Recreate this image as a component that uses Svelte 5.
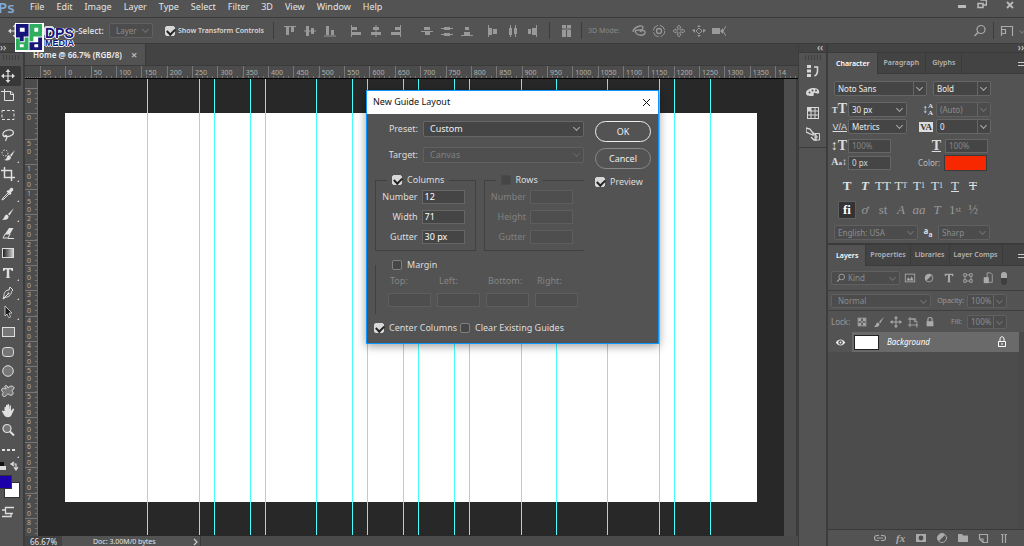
<script>
	const menus = ['File', 'Edit', 'Image', 'Layer', 'Type', 'Select', 'Filter', '3D', 'View', 'Window', 'Help'];

	const guides = [147, 199, 214, 250, 265, 316, 352, 367, 403, 418, 454, 469, 521, 556, 607, 659, 674, 710];
	const canvasLeft = 38;

	const rulerX = [50];
	for (let i = 0; i <= 1350; i += 50) rulerX.push(i);
	const rulerY = [50];
	for (let i = 0; i <= 750; i += 50) rulerY.push(i);

	const move = '<path d="M7 1v12M1 7h12" stroke="currentColor" stroke-width="1.2"/><path d="M7 0l2.4 3H4.600zM7 14l2.400-3H4.600zM0 7l3-2.400v4.800zM14 7l-3-2.400v4.800z" fill="currentColor"/>';
	const half = '<circle cx="7" cy="7" r="4.500" stroke="currentColor" fill="none"/><path d="M3.800 10.200A4.500 4.500 0 0 1 10.200 3.800z" fill="currentColor"/>';
	const brush = '<path d="M13 1L7 7l1.500 1.500zM6 7.500c-3 0-2 4-5 5 3 1 7 0 6.500-3.500z" fill="currentColor"/>';

	const icons = {
		move,
		artboard: '<path d="M3.500 0v11.500H12.500V5L10 2.500H0" fill="none" stroke="currentColor"/><path d="M9.500 2.500v3h3" fill="none" stroke="currentColor"/>',
		marquee: '<rect x="1" y="2.500" width="12" height="9" fill="none" stroke="currentColor" stroke-dasharray="3 2"/>',
		lasso: '<path d="M4 9C0 7 2 3 7 2s7 3 4 5-7 2-7 1 2-1 2 1-2 2-1 4" fill="none" stroke="currentColor" stroke-width="1.200"/>',
		quick: '<circle cx="4" cy="5" r="3" fill="none" stroke="currentColor" stroke-dasharray="1.500 1.500"/><path d="M14 2L9 7l1.500 1.500zM8 7c-3 1-1 4-5 5 4 1 7 0 7-3z" fill="currentColor"/>',
		crop: '<path d="M3.500 0v10.500H14M0 3.500h10.500V14" fill="none" stroke="currentColor" stroke-width="1.500"/>',
		dropper: '<path d="M9 1.500c2-2 4 0 3 2l-2 2 .5 1L9 8 5.500 4.500 7 3l1 .5z" fill="currentColor"/><path d="M7 6l-5 5-1 2 2-1 5-5" fill="none" stroke="currentColor"/>',
		brush,
		eraser: '<path d="M8 2h4.500L9 8H4z" fill="currentColor"/><path d="M4 8h5l-2 4H2zM7 12.500h6" fill="none" stroke="currentColor"/>',
		type: '<path d="M2 2h10v3h-1.200L10 3.500H8.200v7.500l1.300 1H4.500l1.300-1V3.500H4L3.200 5H2z" fill="currentColor"/>',
		pen: '<path d="M9 1l3 3-1.500 1.500c0 3-2 5-6 6L2 13l1-3c0-4 2-6 5-6zM3 12l4-4" fill="none" stroke="currentColor"/><circle cx="7.500" cy="7.500" r="1" fill="currentColor"/>',
		arrow: '<path d="M4 1l7 7H8l1.500 4-1.700.7L6 9l-2 2z" fill="#1c1c1c" stroke="currentColor" stroke-width=".8"/>',
		rect: '<rect x="1.500" y="2.500" width="12" height="9" fill="#777" stroke="currentColor"/>',
		round: '<rect x="1.500" y="2.500" width="11" height="9" rx="3" fill="#777" stroke="currentColor"/>',
		ellipse: '<circle cx="7" cy="7" r="5.300" fill="#777" stroke="currentColor"/>',
		blob: '<path d="M4 2c1-1 3 0 3 2 2-3 6-2 6 0s-3 2-2 3 2 3 0 4-3-1-4-1-3 4-5 2 1-3 0-4-2-1-1-3 3 0 4 0-2-2-1-3z" fill="#777" stroke="currentColor"/>',
		hand: '<path d="M3.500 7V3.500c0-1 1.500-1 1.500 0V6V1.500c0-1 1.500-1 1.500 0V6V.800c0-1 1.600-1 1.600 0V6l.5-4c.1-1 1.500-.8 1.400.2L10 7l1.500-2c.6-1 2-.3 1.500.7L10.500 11c-1 3-6 3-7.500 0L1 7.500c-.5-1 .8-1.500 1.500-.5z" fill="currentColor"/>',
		zoom: '<circle cx="6" cy="5.500" r="4" fill="#777" stroke="currentColor" stroke-width="1.200"/><path d="M9 8.500l4 4" stroke="currentColor" stroke-width="2"/>',
		dots: '<path d="M1 7h3M6 7h3M11 7h3" stroke="currentColor" stroke-width="2"/>',
		alignTop: '<path d="M1 2.500h12" stroke="currentColor"/><path d="M3 3h3v8H3zM8 3h3v5H8z" fill="currentColor"/>',
		alignMid: '<path d="M1 7h12" stroke="currentColor"/><path d="M3 2h3v10H3zM8 4h3v6H8z" fill="currentColor"/>',
		alignBottom: '<path d="M1 12h12" stroke="currentColor"/><path d="M3 2h3v9H3zM8 6h3v5H8z" fill="currentColor"/>',
		alignLeft: '<path d="M2.500 1v12" stroke="currentColor"/><path d="M3 3h5v3H3zM3 8h9v3H3z" fill="currentColor"/>',
		alignCenter: '<path d="M7 1v12" stroke="currentColor"/><path d="M4 3h6v3H4zM2 8h10v3H2z" fill="currentColor"/>',
		alignRight: '<path d="M11.500 1v12" stroke="currentColor"/><path d="M6 3h5v3H6zM2 8h9v3H2z" fill="currentColor"/>',
		distTop: '<path d="M1 7.500h12" stroke="currentColor"/><path d="M4 3h6v3H4zM5 7h5v4H5z" fill="currentColor"/>',
		distMid: '<path d="M1 4.500h12M1 10.500h12" stroke="currentColor"/><path d="M4 3h6v3H4zM4 9h6v3H4z" fill="currentColor"/>',
		distBottom: '<path d="M1 11.500h12" stroke="currentColor"/><path d="M5 3h4v3H5zM4 8h6v3H4z" fill="currentColor"/>',
		distLeft: '<path d="M2.500 1v12" stroke="currentColor"/><path d="M3 4h3v7H3zM7 5h4v5H7z" fill="currentColor"/>',
		distCenter: '<path d="M4.500 1v12M9.500 1v12" stroke="currentColor"/><path d="M3 4h3v7H3zM8 4h3v6H8z" fill="currentColor"/>',
		distRight: '<path d="M10.500 1v12" stroke="currentColor"/><path d="M2 5h3v5H2zM6 4h4v7H6z" fill="currentColor"/>',
		auto: '<path d="M3 1h4v3H3zM3 6h4v7H3zM8 1h4v3H8zM8 6h4v7H8z" fill="currentColor"/><path d="M3 5h9" stroke="currentColor"/>',
		orbit: '<path d="M1 8c0-3 3-5 7-6s4 4 0 4-6 0-4 3 8 3 9 0-4-3-5-1" fill="none" stroke="currentColor" stroke-width="1.300"/>',
		roll: '<circle cx="7" cy="7" r="2.500" fill="none" stroke="currentColor" stroke-width="1.300"/><circle cx="7" cy="7" r="5.700" fill="none" stroke="currentColor" stroke-dasharray="7 2"/>',
		pan: '<path d="M7 1l2 2.500H8V6h2.500V5L13 7l-2.500 2V8H8v2.500h1L7 13l-2-2.500h1V8H3.500v1L1 7l2.500-2v1H6V3.500H5z" fill="none" stroke="currentColor" stroke-width=".9"/>',
		slide: '<path d="M7 4l3 3-3 3-3-3z" fill="none" stroke="currentColor"/><path d="M7 1l2 2H5zM7 13l2-2H5zM0 6l3-1v4zM14 6l-3-1v4z" fill="currentColor"/>',
		camera: '<path d="M0 4h8v6H0zM8 7l3-3v6z" fill="currentColor"/><path d="M14 2l-3 5 3 5" fill="none" stroke="currentColor"/>',
		search: '<circle cx="8" cy="5.500" r="4" fill="none" stroke="currentColor" stroke-width="1.200"/><path d="M5 8.500L1.500 12" stroke="currentColor" stroke-width="1.500"/>',
		workspace: '<path d="M1.500 12V2.500h11V12M1.500 5.500h4v4h-4" fill="none" stroke="currentColor" stroke-width="1.200"/>',
		history: '<path d="M1 1h4v3H1zM1 5.500h4v3H1zM1 10h4v3H1z" fill="currentColor"/><path d="M8 3h3.500v4c0 3-1 4-3 5" fill="none" stroke="currentColor" stroke-width="1.500"/>',
		palette: '<path d="M0 8c0-3 4-5 8-5s6 3 5 5-4-1-5 0 1 3-2 3-6 0-6-3z" fill="currentColor"/><circle cx="3.500" cy="7.500" r="1" fill="#535353"/><circle cx="6.500" cy="5.500" r="1" fill="#535353"/><circle cx="10" cy="5.500" r="1" fill="#535353"/>',
		swatches: '<rect x="1.500" y="1.500" width="11" height="11" fill="none" stroke="currentColor"/><path d="M1.500 5h11M1.500 9h11M5 1.500v11M9 1.500v11" stroke="currentColor"/><path d="M2 2h3v3H2z" fill="currentColor"/>',
		styles: '<path d="M0 1l4 1 3 4v2L0 5zM6 5l4 3v5H8L5 10" fill="none" stroke="currentColor" stroke-width="1.300"/><path d="M9 6.500h4.500v6.500H9zM11 9v2" fill="none" stroke="currentColor"/>',
		image: '<rect x="1.500" y="2.500" width="11" height="9" fill="none" stroke="currentColor"/><path d="M3 10l2-4 2 3 2-4 2 5z" fill="currentColor"/>',
		half,
		frame: '<path d="M3.500 3.500h7v7h-7z" fill="none" stroke="currentColor"/><path d="M2 2h3v3H2zM9 2h3v3H9zM2 9h3v3H2zM9 9h3v3H9z" fill="#535353" stroke="currentColor"/>',
		smart: '<path d="M6 1h4l2 2v9H6z" fill="none" stroke="currentColor"/><path d="M2 6h6v7H2z" fill="currentColor"/>',
		checker: '<rect x="2.500" y="2.500" width="9" height="9" fill="none" stroke="currentColor"/><path d="M3 3h3v3H3zM8 3h3v3H8zM6 6h2v2H6zM3 8h3v3H3zM8 8h3v3H8z" fill="currentColor"/>',
		artframe: '<path d="M3.500 1v12M3.500 3.500h5l3 3v7M1 3.500h10M1 10.500h12M8.500 3v3.500h3" fill="none" stroke="currentColor"/>',
		lock: '<path d="M3 6h8v6H3z" fill="currentColor"/><path d="M4.500 6V4c0-3 5-3 5 0v2" fill="none" stroke="currentColor" stroke-width="1.300"/>',
		lockOpen: '<path d="M3.500 6.500h7v5h-7zM5 6V4c0-3 4-3 4 0v2M7 8v2" fill="none" stroke="currentColor"/>',
		eye: '<path d="M1 7c3-5 9-5 12 0-3 5-9 5-12 0z" fill="currentColor"/><circle cx="7" cy="7" r="2.800" fill="#535353"/><circle cx="7" cy="7" r="1.200" fill="currentColor"/>',
		link: '<path d="M6 4.500H4a2.500 2.500 0 0 0 0 5h2M8 4.500h2a2.500 2.500 0 0 1 0 5H8M4 7h6" fill="none" stroke="currentColor" stroke-width="1.100"/>',
		mask: '<path d="M2 3h10v8H2z" fill="currentColor"/><circle cx="7" cy="7" r="2.400" fill="#4b4b4b"/>',
		folder: '<path d="M2 3h4l1 1.500h5V11H2z" fill="currentColor"/>',
		newLayer: '<path d="M3.500 3.500h8v8H7L3.500 8zM7 11.500V8H3.500" fill="none" stroke="currentColor" stroke-width="1.200"/>',
		trash: '<path d="M5.500 4v8M8.500 4v8M4 3.500h2.500M7.500 3.500H10" stroke="currentColor" stroke-width="1.200"/>',
	};

	const tools = ['move', 'artboard', 'marquee', 'lasso', 'quick', 'crop', 'dropper', 'brush', 'eraser', 'gradient', 'type', 'pen', 'arrow', 'rect', 'round', 'ellipse', 'blob', 'hand', 'zoom', 'dots'];
	const corner = ['quick', 'crop', 'dropper', 'brush', 'type', 'pen', 'arrow', 'dots'];
	const alignGroups = [
		['alignTop', 'alignMid', 'alignBottom'],
		['alignLeft', 'alignCenter', 'alignRight'],
		['distTop', 'distMid', 'distBottom'],
		['distLeft', 'distCenter', 'distRight'],
	];

	let columns = $state([
		{ label: 'Number', value: '12' },
		{ label: 'Width', value: '71' },
		{ label: 'Gutter', value: '30 px' },
	]);
	const rows = ['Number', 'Height', 'Gutter'];
	const margins = ['Top:', 'Left:', 'Bottom:', 'Right:'];
	let open = $state(true);
	let tool = $state('move');
</script>

{#snippet icon(name)}
	<svg class="icon" viewBox="0 0 14 14" aria-hidden="true">{@html icons[name]}</svg>
{/snippet}

{#snippet combo(label, value, cls)}
	<span class="combo {cls}">
		<select aria-label={label}><option>{value}</option></select>
	</span>
{/snippet}

<div class="app">
	<header class="menubar">
		<span class="ps">Ps</span>
		<nav>
			{#each menus as m}
				<button>{m}</button>
			{/each}
		</nav>
		<div class="window-buttons">
			<button aria-label="Minimize"><svg viewBox="0 0 10 10"><path d="M1 6h8v3H1z" fill="#bbb" /></svg></button>
			<button aria-label="Restore"><svg viewBox="0 0 10 10"><path d="M3.500 1h6v5h-3M1 4.500h5v4H1z" fill="none" stroke="#bbb" stroke-width="1.500" /></svg></button>
			<button class="close" aria-label="Close"><svg viewBox="0 0 10 10"><path d="M2 3l6 6M8 3L2 9" stroke="#bbb" stroke-width="1.800" /></svg></button>
		</div>
	</header>

	<div class="options">
		<span class="tool-preview">{@render icon('move')}</span>
		<label class="check auto"><input type="checkbox" checked />Auto-Select:</label>
		{@render combo('Auto-select target', 'Layer', 'dim w-layer')}
		<label class="check show"><input type="checkbox" checked />Show Transform Controls</label>
		<i class="sep"></i>
		{#each alignGroups as group, i}
			<div class="icon-group" class:spaced={i === 2}>
				{#each group as name}
					<button aria-label={name}>{@render icon(name)}</button>
				{/each}
			</div>
		{/each}
		<i class="sep"></i>
		<button class="auto-align" aria-label="Auto align">{@render icon('auto')}</button>
		<i class="sep"></i>
		<span class="mode">3D Mode:</span>
		<div class="icon-group">
			{#each ['orbit', 'roll', 'pan', 'slide', 'camera'] as name}
				<button aria-label={name}>{@render icon(name)}</button>
			{/each}
		</div>
		<div class="options-end">
			<button aria-label="Search">{@render icon('search')}</button>
			<i class="sep"></i>
			<button aria-label="Workspace">{@render icon('workspace')}</button>
			<i class="chev"></i>
		</div>
	</div>

	<div class="body">
		<aside class="toolbar">
			<div class="strip">››</div>
			<div class="grip"></div>
			<div class="tools">
				{#each tools as name}
					<button class:active={tool === name} class:corner={corner.includes(name)} aria-label={name} onclick={() => (tool = name)}>
						{#if name === 'gradient'}
							<span class="gradient"></span>
						{:else}
							{@render icon(name)}
						{/if}
					</button>
				{/each}
			</div>
			<div class="swap">
				<svg viewBox="0 0 20 10"><path d="M0 1h3v4h3v4H0z" fill="#ddd" /><path d="M0 1h4v4H0z" fill="#111" /><path d="M12 3h4v5M14 1l-3 2 3 2M14 6l2 3 2-3" fill="none" stroke="#ddd" stroke-width="1.200" /></svg>
			</div>
			<div class="colors"><i class="back"></i><i class="front"></i></div>
			<svg class="screen" viewBox="0 0 14 14"><path d="M0 5h3M12 2.500H3.500v6H11M0 11.500h9V9" fill="none" stroke="#ddd" stroke-width="1.300" /></svg>
		</aside>

		<section class="document">
			<div class="tabs">
				<div class="tab">Home @ 66.7% (RGB/8) <button aria-label="Close tab">×</button></div>
			</div>
			<div class="ruler-x">
				<i class="origin"></i>
				{#each rulerX as n}
					<span>{n}</span>
				{/each}
				<span class="last">14</span>
			</div>
			<div class="work">
				<div class="ruler-y">
					{#each rulerY as n}
						<span>{n}</span>
					{/each}
					<span>800</span>
				</div>
				<div class="canvas">
					<div class="page"></div>
					{#each guides as x}
						<i class="guide" style="left: {x - canvasLeft}px"></i>
					{/each}
				</div>
				<div class="scroll-y"></div>
			</div>
			<footer class="status">
				<span class="percent">66.67%</span>
				<span class="doc">Doc: 3.00M/0 bytes</span>
				<span class="more"><svg viewBox="0 0 6 8"><path d="M1 1l3 3-3 3" fill="none" stroke="#ccc" stroke-width="1.200" /></svg></span>
			</footer>
		</section>

		<aside class="dock">
			<div class="strip">‹‹</div>
			<div class="grip"></div>
			<div class="dock-icons">
				{#each ['history', 'palette', 'swatches', 'styles'] as name}
					<button aria-label={name}>{@render icon(name)}</button>
				{/each}
			</div>
		</aside>

		<aside class="panels">
			<div class="strip end">››</div>
			<section class="character">
				<div class="panel-tabs char-tabs">
					<button class="current">Character</button>
					<button>Paragraph</button>
					<button>Glyphs</button>
					<i class="burger"></i>
				</div>
				<div class="fields">
					<div class="line first">
						{@render combo('Font family', 'Noto Sans', 'split w-family')}
						{@render combo('Font style', 'Bold', 'split w-style')}
					</div>
					<div class="line">
						<b class="sym"><small>T</small>T</b>
						{@render combo('Font size', '30 px', 'w-size')}
						<b class="sym right stack">↕<small>A<br />A</small></b>
						{@render combo('Leading', '(Auto)', 'split dim w-lead')}
					</div>
					<div class="line">
						<b class="sym va">V/A</b>
						{@render combo('Kerning', 'Metrics', 'w-size')}
						<b class="sym right"><span class="inverse">VA</span></b>
						{@render combo('Tracking', '0', 'split w-lead')}
					</div>
					<div class="line scale">
						<b class="sym">↕T</b>
						<input class="w-scale dim" aria-label="Vertical scale" value="100%" />
						<b class="sym right wide under">T</b>
						<input class="w-scale dim" aria-label="Horizontal scale" value="100%" />
					</div>
					<div class="line">
						<b class="sym small">A<sup>a</sup>↕</b>
						<input class="w-scale" aria-label="Baseline shift" value="0 px" />
						<span class="color-label">Color:</span>
						<button class="swatch" aria-label="Text color"></button>
					</div>
				</div>
				<div class="glyphs">
					<button><b>T</b></button>
					<button><b><em>T</em></b></button>
					<button>TT</button>
					<button>T<small>T</small></button>
					<button>T<sup>1</sup></button>
					<button>T<sub>1</sub></button>
					<button><u>T</u></button>
					<button><s>T</s></button>
				</div>
				<div class="glyphs opentype">
					<button class="on">fi</button>
					<button><em>ơ</em></button>
					<button>st</button>
					<button><em>A</em></button>
					<button><em>aa</em></button>
					<button><em>T</em></button>
					<button>1<sup>st</sup></button>
					<button>½</button>
				</div>
				<div class="line lang">
					{@render combo('Language', 'English: USA', 'dim w-lang')}
					<b class="aa">a<sub>a</sub></b>
					{@render combo('Anti-aliasing', 'Sharp', 'dim w-sharp')}
				</div>
			</section>

			<section class="layers">
				<div class="panel-tabs">
					<button class="current">Layers</button>
					<button>Properties</button>
					<button>Libraries</button>
					<button>Layer Comps</button>
					<i class="burger"></i>
				</div>
				<div class="row filter">
					<span class="kind">{@render icon('search')}{@render combo('Filter', 'Kind', 'dim w-kind')}</span>
					<div class="filters">
						{#each ['image', 'half', 'type', 'frame', 'smart'] as name}
							<button aria-label={name}>{@render icon(name)}</button>
						{/each}
						<i class="toggle"></i>
					</div>
				</div>
				<div class="row">
					{@render combo('Blend mode', 'Normal', 'dim w-blend')}
					<span class="label">Opacity:</span>
					{@render combo('Opacity', '100%', 'split dim w-pct')}
				</div>
				<div class="row locks">
					<span class="lock-label">Lock:</span>
					{#each ['checker', 'brush', 'move', 'artframe', 'lock'] as name}
						<button aria-label={name}>{@render icon(name)}</button>
					{/each}
					<span class="label">Fill:</span>
					{@render combo('Fill', '100%', 'split dim w-pct')}
				</div>
				<div class="layer-list">
					<div class="layer">
						<button class="eye" aria-label="Visibility">{@render icon('eye')}</button>
						<div class="layer-main">
							<i class="thumb"></i>
							<em>Background</em>
							{@render icon('lockOpen')}
						</div>
					</div>
				</div>
				<footer class="layer-actions">
					<button aria-label="Link">{@render icon('link')}</button>
					<button class="fx">fx</button>
					{#each ['mask', 'half', 'folder', 'newLayer', 'trash'] as name}
						<button aria-label={name}>{@render icon(name)}</button>
					{/each}
				</footer>
			</section>
		</aside>
	</div>

	<div class="brand">
		<svg viewBox="0 0 30 30">
			<path d="M0 0h30v30H0z" fill="#fff" />
			<path d="M1 1h13v13H9v5H5v-4H1zM5 5v4h5V5z" fill="#16167a" fill-rule="evenodd" />
			<path d="M15 1h13v13h-9v5h-4zM20 5v4h4V5z" fill="#2fae60" fill-rule="evenodd" />
			<path d="M1 16h4v4h5v-5h4v13H1zM5 22v3h4v-3z" fill="#2fae60" fill-rule="evenodd" />
			<path d="M24 15h4v13H15v-8h9zM20 22v3h4v-3z" fill="#16167a" fill-rule="evenodd" />
		</svg>
		<div><strong>DPS</strong><span>MEDIA</span></div>
	</div>

	{#if open}
		<div class="dialog" role="dialog" aria-label="New Guide Layout">
			<div class="title">
				<span>New Guide Layout</span>
				<button aria-label="Close" onclick={() => (open = false)}><svg viewBox="0 0 10 10"><path d="M1 1l7 7M8 1L1 8" stroke="#111" /></svg></button>
			</div>
			<div class="content">
				<div class="settings">
					<div class="pick">
						<label for="preset">Preset:</label>
						<span class="combo"><select id="preset"><option>Custom</option></select></span>
					</div>
					<div class="pick">
						<label for="target">Target:</label>
						<span class="combo off"><select id="target" disabled><option>Canvas</option></select></span>
					</div>
					<div class="sets">
						<fieldset>
							<legend><label class="check"><input type="checkbox" checked />Columns</label></legend>
							{#each columns as c}
								<label class="num">{c.label}<input type="text" bind:value={c.value} /></label>
							{/each}
						</fieldset>
						<fieldset class="no-right">
							<legend><label class="check"><input type="checkbox" /><span>Rows</span></label></legend>
							{#each rows as r}
								<label class="num">{r}<input type="text" disabled /></label>
							{/each}
						</fieldset>
					</div>
					<div class="margin">
						<label class="check"><input type="checkbox" />Margin</label>
						<div class="margin-fields">
							{#each margins as m}
								<label>{m}<input type="text" disabled /></label>
							{/each}
						</div>
					</div>
				</div>
				<div class="actions">
					<button class="ok" onclick={() => (open = false)}>OK</button>
					<button onclick={() => (open = false)}>Cancel</button>
					<label class="check"><input type="checkbox" checked />Preview</label>
				</div>
			</div>
			<div class="bottom">
				<label class="check"><input type="checkbox" checked />Center Columns</label>
				<label class="check"><input type="checkbox" />Clear Existing Guides</label>
			</div>
		</div>
	{/if}
</div>

<style>
	:global(body) {
		margin: 0;
		background: #535353;
	}

	.app {
		position: relative;
		display: flex;
		flex-direction: column;
		height: 100vh;
		overflow: hidden;
		background: #535353;
		color: #d8d8d8;
		font: 8px/12px "Noto Sans", "Open Sans", sans-serif;
	}

	.app * {
		box-sizing: border-box;
	}

	button, input, select {
		margin: 0;
		padding: 0;
		border: 0;
		border-radius: 0;
		background: none;
		color: inherit;
		font: inherit;
	}

	button {
		display: flex;
		align-items: center;
		justify-content: center;
	}

	.icon {
		display: block;
		flex: none;
		width: 14px;
		height: 14px;
	}

	input[type="checkbox"] {
		appearance: none;
		position: relative;
		flex: none;
		width: 10px;
		height: 10px;
		border: 1px solid #808080;
		border-radius: 2px;
		background: #464646;
	}

	input[type="checkbox"]:checked {
		border-color: #d8d8d8;
		background: #d8d8d8;
	}

	input[type="checkbox"]:checked::after {
		content: "";
		position: absolute;
		left: 1px;
		top: 1px;
		width: 6px;
		height: 4px;
		border-left: 2px solid #222;
		border-bottom: 2px solid #222;
		transform: rotate(-45deg);
	}

	.check {
		display: flex;
		align-items: center;
		gap: 5px;
		white-space: nowrap;
	}

	.combo {
		position: relative;
		display: flex;
		flex: none;
		height: 15px;
		border: 1px solid #666;
		border-radius: 2px;
		background: #454545;
		color: #eee;
	}

	.combo select {
		appearance: none;
		width: 100%;
		padding: 0 12px 0 3px;
		outline: none;
		opacity: 1;
	}

	.combo::after, .chev {
		content: "";
		width: 4px;
		height: 4px;
		border-right: 1px solid #aaa;
		border-bottom: 1px solid #aaa;
		transform: rotate(45deg);
	}

	.chev {
		border-color: #777;
	}

	.combo::after {
		position: absolute;
		right: 4px;
		top: 3px;
		pointer-events: none;
	}

	.combo.split::before {
		content: "";
		position: absolute;
		right: 12px;
		top: 0;
		bottom: 0;
		border-left: 1px solid #666;
	}

	.dim {
		color: #858585;
	}

	.combo.dim {
		border-color: #606060;
		background: #4c4c4c;
		color: #8c8c8c;
	}

	.combo.dim::after {
		border-color: #707070;
	}

	/* menu bar */
	.menubar {
		display: flex;
		flex: none;
		height: 18px;
		padding-bottom: 4px;
		border-bottom: 1px solid #3a3a3a;
		align-items: center;
		font-size: 9px;
		color: #e4e4e4;
	}

	.ps {
		width: 30px;
		font-size: 15px;
		font-weight: 600;
		color: #7fa9d6;
		text-indent: -2px;
	}

	nav {
		display: flex;
		gap: 12px;
	}

	.window-buttons {
		display: flex;
		gap: 10px;
		margin-left: auto;
		padding: 0 9px 5px 0;
	}

	.window-buttons svg {
		width: 10px;
		height: 10px;
	}

	.close {
		margin-left: 8px;
	}

	/* options bar */
	.options {
		display: flex;
		flex: none;
		align-items: center;
		height: 26px;
		padding-left: 8px;
		border-bottom: 1px solid #3a3a3a;
		font-weight: 600;
	}

	.tool-preview {
		width: 36px;
	}

	.auto {
		width: 65px;
		gap: 3px;
	}

	.w-layer {
		width: 44px;
		font-weight: 400;
	}

	.w-layer select {
		padding-left: 6px;
	}

	.show {
		width: 117px;
		padding-left: 12px;
		gap: 3px;
		font-size: 7px;
	}

	.sep {
		width: 1px;
		height: 17px;
		margin: 0 3px;
		background: #3c3c3c;
	}

	.icon-group {
		display: flex;
		gap: 6px;
		margin: 0 6px;
		color: #999;
	}

	.spaced {
		margin-left: 11px;
	}

	.auto-align {
		width: 25px;
		color: #999;
	}

	.mode {
		padding: 0 6px 0 3px;
		font-size: 7px;
		font-weight: 400;
		color: #8a8a8a;
	}

	.options-end {
		display: flex;
		align-items: center;
		gap: 3px;
		margin-left: auto;
		color: #aaa;
	}

	.options-end .chev {
		margin-left: 3px;
	}

	.body {
		display: flex;
		flex: 1;
		min-height: 0;
	}

	.strip {
		flex: none;
		height: 9px;
		background: #434343;
		border-bottom: 1px solid #3a3a3a;
		font-size: 10px;
		line-height: 6px;
		color: #ddd;
	}

	.grip {
		flex: none;
		height: 5px;
		margin: 2px 3px;
		background: repeating-linear-gradient(90deg, #404040 0 1px, transparent 1px 3px);
	}

	/* tools */
	.toolbar {
		display: flex;
		flex: none;
		flex-direction: column;
		width: 25px;
		border-right: 2px solid #3c3c3c;
		color: #e0e0e0;
	}

	.tools {
		display: grid;
		grid-auto-rows: 1fr;
		flex: none;
		height: 394px;
		margin-top: 4px;
	}

	.tools button {
		position: relative;
		width: 21px;
		padding-right: 5px;
		border-radius: 0 2px 2px 0;
	}

	.tools .active {
		background: #383838;
	}

	.tools .corner::after {
		content: "";
		position: absolute;
		right: 2px;
		bottom: 2px;
		border: 1px solid;
		border-color: transparent #ccc #ccc transparent;
	}

	.gradient {
		width: 12px;
		height: 10px;
		border: 1px solid #ddd;
		background: linear-gradient(90deg, #222, #ccc);
	}

	.swap {
		height: 13px;
		padding-top: 1px;
	}

	.swap svg {
		display: block;
		width: 20px;
		height: 10px;
	}

	.colors {
		position: relative;
		height: 30px;
		margin-top: 2px;
	}

	.colors i {
		position: absolute;
		border: 1px solid #333;
	}

	.front {
		left: -3px;
		top: 0;
		width: 15px;
		height: 14px;
		background: #1c00a8;
	}

	.back {
		left: 4px;
		top: 7px;
		width: 16px;
		height: 16px;
		background: #fff;
	}

	.screen {
		width: 14px;
		height: 14px;
		margin-left: 2px;
	}

	/* document */
	.document {
		display: flex;
		flex: 1;
		flex-direction: column;
		min-width: 0;
	}

	.tabs {
		display: flex;
		flex: none;
		height: 22px;
		background: #434343;
		border-bottom: 1px solid #3a3a3a;
	}

	.tab {
		display: flex;
		align-items: center;
		gap: 9px;
		padding: 0 8px;
		border-right: 1px solid #3a3a3a;
		background: #535353;
		font-weight: 600;
		color: #eee;
	}

	.tab button {
		font-size: 11px;
		color: #bbb;
	}

	.ruler-x {
		display: flex;
		flex: none;
		height: 13px;
		border-bottom: 1px solid #000;
		background: #4c4c4c;
		font-size: 7px;
		line-height: 14px;
		color: #b0b0b0;
	}

	.origin {
		width: 15px;
		border: 0 dotted #777;
		border-bottom-width: 1px;
	}

	.ruler-x span {
		flex: 1;
		min-width: 0;
		padding-left: 2px;
		border-left: 1px solid #777;
		background: repeating-linear-gradient(90deg, transparent 0 4px, #777 4px 5px) bottom / 100% 2px no-repeat;
	}

	.ruler-x .last {
		flex: 0 0 23px;
	}

	.work {
		display: flex;
		flex: 1;
		min-height: 0;
	}

	.ruler-y {
		display: flex;
		flex-direction: column;
		flex: none;
		width: 13px;
		padding-top: 9px;
		overflow: hidden;
		border-right: 1px solid #6a6a6a;
		background: #4c4c4c;
		font-size: 7px;
		line-height: 8px;
		color: #b0b0b0;
	}

	.ruler-y span {
		flex: 1;
		min-height: 0;
		padding: 0 6px 0 2px;
		border-top: 1px solid #777;
		background: repeating-linear-gradient(180deg, transparent 0 4px, #777 4px 5px) right / 2px 100% no-repeat;
		word-break: break-all;
	}

	.ruler-y span:last-child {
		flex: 0 0 18px;
	}

	.canvas {
		position: relative;
		flex: 1;
		padding: 34px 27px;
		background: #282828;
	}

	.page {
		height: 100%;
		background: #fff;
	}

	.guide {
		position: absolute;
		top: 0;
		bottom: 1px;
		width: 1px;
		background: #4afcfc;
	}

	.scroll-y {
		width: 14px;
		border-right: 2px solid #3c3c3c;
		background: #4d4d4d;
	}

	.status {
		display: flex;
		flex: none;
		height: 10px;
		line-height: 12px;
		background: #4a4a4a;
		color: #e4e4e4;
		font-size: 8px;
	}

	.percent {
		width: 37px;
		padding-left: 5px;
		background: #434343;
	}

	.doc {
		width: 125px;
		padding-left: 31px;
		background: #535353;
		font-size: 7px;
	}

	.more {
		width: 14px;
		padding: 2px 0 0 6px;
		border-right: 1px solid #3a3a3a;
		background: #535353;
	}

	.more svg {
		display: block;
		width: 6px;
		height: 8px;
	}

	/* icon dock */
	.dock {
		flex: none;
		width: 30px;
		border-left: 1px solid #3c3c3c;
		border-right: 2px solid #3c3c3c;
	}

	.dock .strip {
		padding-left: 18px;
	}

	.dock .grip {
		width: 16px;
		margin-left: 6px;
	}

	.dock-icons {
		display: flex;
		flex-direction: column;
		align-items: center;
		gap: 7px;
		padding: 2px 0 6px;
		border-bottom: 1px solid #3a3a3a;
	}

	/* panels */
	.panels {
		display: flex;
		flex: none;
		flex-direction: column;
		width: 196px;
	}

	.end {
		text-align: right;
	}

	.panel-tabs {
		display: flex;
		flex: none;
		height: 21px;
		background: #434343;
		border-bottom: 1px solid #3a3a3a;
		font-weight: 600;
		font-size: 7px;
		color: #b4b4b4;
	}

	.panel-tabs button {
		padding: 0 4px;
		border-right: 1px solid #3a3a3a;
		white-space: nowrap;
	}

	.panel-tabs .current {
		height: 21px;
		padding: 0 7px 0 8px;
		background: #535353;
		color: #fff;
	}

	.char-tabs button {
		padding: 0 6px;
	}

	.burger {
		width: 6px;
		height: 4px;
		margin: 9px 0 0 auto;
		border: solid #ccc;
		border-width: 1px 0;
	}

	.character {
		flex: none;
		height: 192px;
		border-bottom: 2px solid #3a3a3a;
	}

	.fields {
		padding: 0 6px;
	}

	.line {
		display: flex;
		align-items: center;
		height: 15px;
		margin-top: 2px;
	}

	.line.first {
		gap: 6px;
		margin: 7px 0 6px;
	}

	.line.scale {
		margin-top: 4px;
	}

	.fields input {
		height: 14px;
		padding-left: 3px;
		border: 1px solid #666;
		background: #454545;
	}

	.fields .combo {
		height: 15px;
	}

	.w-family { width: 93px; }
	.w-style { width: 58px; }
	.w-size { width: 59px; }
	.w-lead { width: 55px; }
	.w-scale { width: 43px; }
	.w-lang { width: 84px; }
	.w-sharp { width: 52px; }
	.w-kind { width: 69px; }
	.w-blend { width: 100px; }
	.w-pct { width: 40px; }

	.sym {
		display: flex;
		align-items: baseline;
		justify-content: flex-end;
		width: 14px;
		flex: none;
		padding-right: 1px;
		font: bold 14px/13px "Liberation Serif", serif;
		white-space: nowrap;
		color: #ddd;
	}

	.sym small {
		font-size: 9px;
	}

	.sym.small {
		font-size: 10px;
	}

	.sym sup {
		font-size: 7px;
	}

	.va {
		font: 9px/12px "Liberation Sans", sans-serif;
		text-decoration: underline;
	}

	.right {
		margin-left: 11px;
	}

	.fields .right {
		width: 18px;
		padding-right: 3px;
	}

	.fields .wide {
		width: 54px;
		margin-left: 0;
		padding-right: 4px;
	}

	.fields .stack {
		align-items: center;
		font-size: 12px;
	}

	.stack small {
		font: bold 7px/7px "Liberation Serif", serif;
	}

	.inverse {
		padding: 0 1px;
		background: #ddd;
		color: #333;
		font-size: 9px;
		line-height: 10px;
	}

	.under {
		text-decoration: underline;
	}

	.color-label {
		width: 53px;
		padding-left: 27px;
		color: #bbb;
	}

	.swatch {
		width: 43px;
		height: 16px;
		border: 1px solid #3a3a3a;
		background: #f72800;
	}

	.glyphs {
		display: grid;
		grid-template-columns: repeat(8, 18px);
		height: 18px;
		margin: 7px 10px 0;
		font: 13px/12px "Liberation Serif", serif;
		color: #e0e0e0;
	}

	.glyphs small, .glyphs sup, .glyphs sub {
		font-size: 8px;
		line-height: 6px;
	}

	.opentype {
		margin-top: 6px;
		color: #999;
	}

	.on {
		border: 1px solid #606060;
		background: #333;
		color: #fff;
		font-weight: bold;
	}

	.lang {
		padding-left: 6px;
		margin-top: 6px;
	}

	.aa {
		width: 20px;
		text-align: center;
		color: #ddd;
	}

	/* layers */
	.layers {
		display: flex;
		flex: 1;
		flex-direction: column;
		min-height: 0;
	}

	.row {
		display: flex;
		flex: none;
		align-items: center;
		height: 20px;
		padding: 0 17px 0 3px;
		border-bottom: 1px solid #3f3f3f;
	}

	.row.filter {
		height: 25px;
		gap: 4px;
	}

	.row .combo {
		height: 14px;
	}

	.kind {
		position: relative;
	}

	.kind > .icon {
		position: absolute;
		left: 5px;
		top: 1px;
		z-index: 1;
		width: 10px;
		height: 12px;
		color: #aaa;
	}

	.w-kind select {
		padding-left: 16px;
	}

	.filters {
		display: flex;
		flex: 1;
		align-items: center;
		justify-content: space-between;
		color: #aaa;
	}

	.filters .icon {
		width: 12px;
		height: 12px;
	}

	.toggle {
		width: 6px;
		height: 13px;
		border-radius: 3px;
		background: linear-gradient(#aaa 6px, #3f3f3f 6px);
	}

	.w-blend select {
		padding-left: 6px;
	}

	.label {
		flex: 1;
		padding-right: 3px;
		text-align: right;
		font-size: 7px;
		color: #999;
	}

	.locks {
		gap: 5px;
		height: 21px;
		border: 0;
		color: #aaa;
	}

	.locks .icon {
		width: 12px;
		height: 12px;
	}

	.locks .label {
		padding-right: 0;
	}

	.lock-label {
		width: 20px;
		color: #999;
	}

	.layer-list {
		flex: 1;
		border-right: 5px solid #494949;
		background: #4c4c4c;
	}

	.layer {
		display: flex;
		height: 20px;
		background: #535353;
	}

	.eye {
		width: 24px;
		color: #eee;
	}

	.eye .icon {
		width: 11px;
		height: 11px;
	}

	.layer-main {
		display: flex;
		flex: 1;
		align-items: center;
		gap: 8px;
		padding: 0 10px 0 2px;
		background: #6a6a6a;
		color: #fff;
	}

	.layer-main .icon {
		margin-left: auto;
	}

	.thumb {
		width: 25px;
		height: 15px;
		border: 1px solid #222;
		background: #fff;
	}

	.layer-actions {
		display: flex;
		justify-content: space-between;
		height: 17px;
		padding: 0 13px 0 45px;
		border-top: 1px solid #3a3a3a;
		color: #aaa;
	}

	.fx {
		width: 14px;
		font: italic bold 11px/12px "Liberation Serif", serif;
	}

	/* brand mark over the options bar */
	.brand {
		position: absolute;
		left: 15px;
		top: 23px;
		display: flex;
		gap: 1px;
		color: #16167a;
		text-shadow: 0 0 1px #fff, 1px 0 0 #fff, -1px 0 0 #fff, 0 1px 0 #fff;
	}

	.brand svg {
		width: 29px;
		height: 29px;
	}

	.brand div {
		display: flex;
		flex-direction: column;
		padding-top: 5px;
	}

	.brand strong {
		font: bold 14px/11px "Liberation Sans", sans-serif;
	}

	.brand span {
		font: bold 9px/8px "Liberation Sans", sans-serif;
	}

	/* dialog */
	.dialog {
		position: absolute;
		left: 366px;
		top: 90px;
		width: 293px;
		border: 1px solid #0a95ff;
		background: #535353;
		box-shadow: 0 2px 9px rgba(0, 0, 0, .4);
		color: #ddd;
		font-size: 9px;
		line-height: 14px;
	}

	.title {
		display: flex;
		justify-content: space-between;
		height: 23px;
		padding: 0 6px;
		background: #fff;
		color: #111;
		line-height: 22px;
	}

	.title svg {
		width: 10px;
		height: 10px;
	}

	.content {
		display: flex;
		justify-content: space-between;
		padding: 7px 7px 0 8px;
	}

	.settings {
		width: 209px;
	}

	.pick {
		display: flex;
		align-items: center;
		gap: 5px;
		height: 16px;
		margin-bottom: 10px;
	}

	.pick label {
		width: 43px;
		text-align: right;
	}

	.pick .combo {
		flex: 1;
		height: 16px;
	}

	.pick select {
		padding-left: 6px;
	}

	.combo.off {
		border-color: #606060;
		background: #4f4f4f;
		color: #808080;
	}

	.combo.off::after {
		border-color: #666;
	}

	.sets {
		display: flex;
		gap: 8px;
	}

	fieldset {
		flex: 1;
		min-width: 0;
		height: 78px;
		margin: 0;
		padding: 3px 10px 0 0;
		border: 1px solid #404040;
	}

	legend {
		margin-left: 11px;
		padding: 0 5px;
	}

	.no-right {
		border-right-color: transparent;
		color: #808080;
	}

	.no-right legend {
		color: #ddd;
	}

	.no-right legend input {
		border-color: #4a4a4a;
	}

	.num {
		display: flex;
		align-items: center;
		justify-content: flex-end;
		gap: 4px;
		margin-bottom: 6px;
	}

	.num input, .margin-fields input {
		width: 43px;
		height: 14px;
		padding-left: 2px;
		border: 1px solid #666;
		background: #454545;
		color: #fff;
	}

	.num input:disabled, .margin-fields input:disabled {
		border-color: #5e5e5e;
		background: #4e4e4e;
	}

	.margin {
		display: flow-root;
		height: 49px;
		margin-top: 14px;
		padding-left: 12px;
		border-left: 1px solid #404040;
	}

	.margin .check {
		height: 14px;
		margin: -7px 0 2px 4px;
	}

	.margin-fields {
		display: flex;
		gap: 6px;
	}

	.margin-fields label {
		display: flex;
		flex-direction: column;
		gap: 5px;
		color: #858585;
		text-indent: 2px;
	}

	.actions {
		display: flex;
		flex-direction: column;
		width: 56px;
	}

	.actions button {
		height: 21px;
		margin-bottom: 6px;
		border: 1px solid #888;
		border-radius: 11px;
		color: #eee;
	}

	.actions .ok {
		border-color: #eee;
	}

	.bottom {
		display: flex;
		gap: 3px;
		padding: 7px 7px 8px;
	}
</style>
